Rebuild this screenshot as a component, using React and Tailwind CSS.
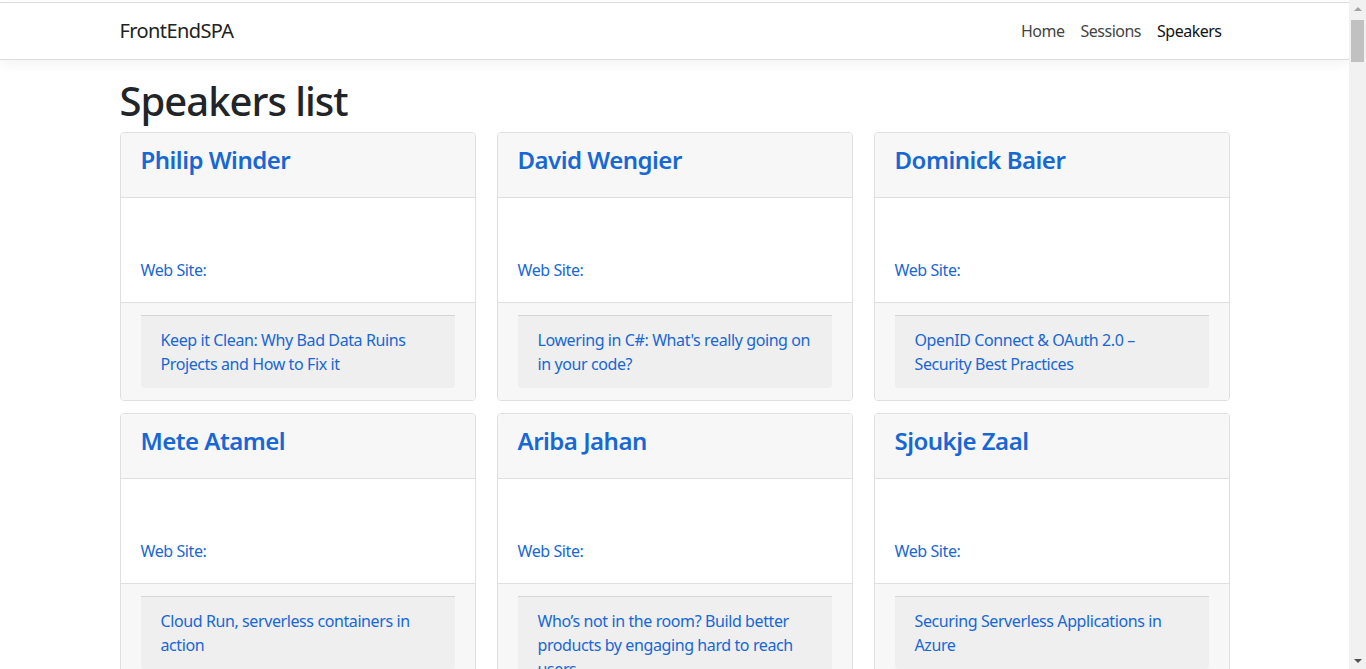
import React from 'react';

const speakers = [
  { name: 'Philip Winder', session: 'Keep it Clean: Why Bad Data Ruins Projects and How to Fix it' },
  { name: 'David Wengier', session: "Lowering in C#: What's really going on in your code?" },
  { name: 'Dominick Baier', session: 'OpenID Connect & OAuth 2.0 – Security Best Practices' },
  { name: 'Mete Atamel', session: 'Cloud Run, serverless containers in action' },
  { name: 'Ariba Jahan', session: 'Who’s not in the room? Build better products by engaging hard to reach users' },
  { name: 'Sjoukje Zaal', session: 'Securing Serverless Applications in Azure' },
];

const SpeakerCard = ({ speaker }) => (
  <div className="rounded-[4px] border border-[#dfdfdf] overflow-hidden">
    <div className="h-[65px] bg-[#f7f7f7] border-b border-[#dfdfdf] px-5 pt-[12px]">
      <h3 className="text-[24px] leading-[29px] font-semibold tracking-[-0.5px] text-[#1767d4]">{speaker.name}</h3>
    </div>
    <div className="h-[105px] bg-white px-5 pt-[60px] border-b border-[#dfdfdf]">
      <a className="text-[16px] leading-6 tracking-[-0.4px] text-[#1767d4]">Web Site:</a>
    </div>
    <div className="bg-[#f7f7f7] px-5 pt-3 pb-3">
      <div className="bg-[#efefef] border-t border-[#d5d5d5] rounded-b-[4px] px-5 py-3">
        <a className="text-[16px] leading-6 tracking-[-0.4px] text-[#1767d4]">{speaker.session}</a>
      </div>
    </div>
  </div>
);

const App = () => {
  return (
    <div className="flex h-[669px] overflow-hidden bg-white" style={{ fontFamily: '"Noto Sans", "Open Sans", sans-serif' }}>
      <div className="flex-1 min-w-0 overflow-hidden">
        <div className="h-[2px] bg-white" />
        <header className="h-[58px] bg-white border-t border-b border-[#dcdcdc] shadow-[0_4px_12px_rgba(0,0,0,0.05)] relative">
          <div className="max-w-[1110px] mx-auto h-full flex items-center justify-between">
            <span className="text-[20px] tracking-[-0.6px] text-[#222]">FrontEndSPA</span>
            <nav className="flex items-center text-[16px] tracking-[-0.5px]">
              <a className="px-2 text-[#444]">Home</a>
              <a className="px-2 text-[#444]">Sessions</a>
              <a className="px-2 text-[#111]">Speakers</a>
            </nav>
          </div>
        </header>
        <main className="max-w-[1110px] mx-auto pt-[17px]">
          <h1 className="text-[40px] leading-[48px] font-medium tracking-[-1px] text-[#212529] mb-[7px]">Speakers list</h1>
          <div className="grid grid-cols-3 gap-x-[21px] gap-y-[12px]">
            {speakers.map(s => (
              <SpeakerCard key={s.name} speaker={s} />
            ))}
          </div>
        </main>
      </div>
      <div className="w-[17px] bg-[#f1f1f1] flex flex-col items-center">
        <div className="h-[17px] flex items-center justify-center">
          <div className="w-0 h-0 border-l-[4px] border-r-[4px] border-b-[4px] border-l-transparent border-r-transparent border-b-[#a3a3a3]" />
        </div>
        <div className="w-[13px] h-[42px] bg-[#c1c1c1] mt-[3px]" />
        <div className="flex-1" />
        <div className="h-[17px] flex items-center justify-center">
          <div className="w-0 h-0 border-l-[4px] border-r-[4px] border-t-[4px] border-l-transparent border-r-transparent border-t-[#505050]" />
        </div>
      </div>
    </div>
  );
};

export default App;
